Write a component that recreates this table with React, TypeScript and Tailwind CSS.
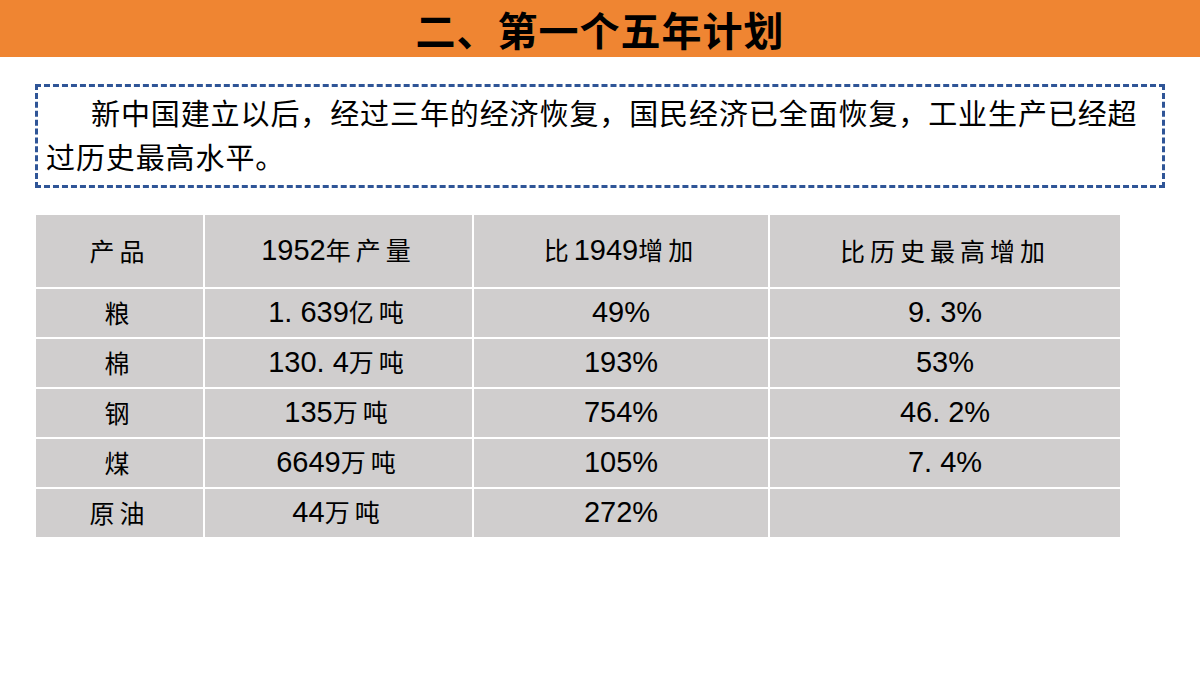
import React from "react";

const cjk = "'Noto Sans CJK SC', 'Noto Sans', sans-serif";
const num = "'Liberation Sans Narrow', 'Liberation Sans', 'Noto Sans CJK SC', sans-serif";

function Cell({ children, header }: { children?: React.ReactNode; header?: boolean }) {
  return (
    <div
      className={`flex items-center justify-center bg-[#d0cece] text-black ${header ? "h-[72px]" : "h-[48px]"}`}
    >
      <div className="flex items-baseline whitespace-nowrap">{children}</div>
    </div>
  );
}

function C({ t }: { t: string }) {
  return (
    <span className="text-[25px] tracking-[5px]" style={{ fontFamily: cjk }}>
      {t}
    </span>
  );
}

function N({ t }: { t: string }) {
  const parts = t.split(".");
  return (
    <span className="text-[29px]" style={{ fontFamily: num }}>
      {parts.length === 2 ? (
        <>
          {parts[0]}
          <span className="mr-[8px]">.</span>
          {parts[1]}
        </>
      ) : (
        t
      )}
    </span>
  );
}

const rows: [string, string, string, string, string][] = [
  ["粮", "1.639", "亿吨", "49%", "9.3%"],
  ["棉", "130.4", "万吨", "193%", "53%"],
  ["钢", "135", "万吨", "754%", "46.2%"],
  ["煤", "6649", "万吨", "105%", "7.4%"],
  ["原油", "44", "万吨", "272%", ""],
];

export default function App() {
  return (
    <div className="w-[1200px] h-[675px] bg-white overflow-hidden relative">
      <div className="h-[57px] bg-[#ef8532] flex items-center justify-center">
        <h1
          className="text-[40px] font-bold text-black leading-none tracking-[1px]"
          style={{ fontFamily: cjk }}
        >
          二、第一个五年计划
        </h1>
      </div>

      <div className="ml-[35px] mt-[27px] w-[1130px] h-[104px] border-[3px] border-dashed border-[#2f5597] pl-[8px] pr-[8px] pt-[3px]">
        <p
          className="text-[29px] leading-[44px] text-black indent-[45px] tracking-[0.9px]"
          style={{ fontFamily: cjk }}
        >
          新中国建立以后，经过三年的经济恢复，国民经济已全面恢复，工业生产已经超过历史最高水平。
        </p>
      </div>

      <div className="ml-[36px] mt-[27px] w-[1084px] grid grid-cols-[167px_267px_294px_350px] gap-[2px] bg-white">
        <Cell header>
          <C t="产品" />
        </Cell>
        <Cell header>
          <N t="1952" />
          <C t="年产量" />
        </Cell>
        <Cell header>
          <C t="比" />
          <N t="1949" />
          <C t="增加" />
        </Cell>
        <Cell header>
          <C t="比历史最高增加" />
        </Cell>
        {rows.map((r) => (
          <React.Fragment key={r[0]}>
            <Cell>
              <C t={r[0]} />
            </Cell>
            <Cell>
              <N t={r[1]} />
              <C t={r[2]} />
            </Cell>
            <Cell>
              <N t={r[3]} />
            </Cell>
            <Cell>{r[4] ? <N t={r[4]} /> : null}</Cell>
          </React.Fragment>
        ))}
      </div>
    </div>
  );
}
